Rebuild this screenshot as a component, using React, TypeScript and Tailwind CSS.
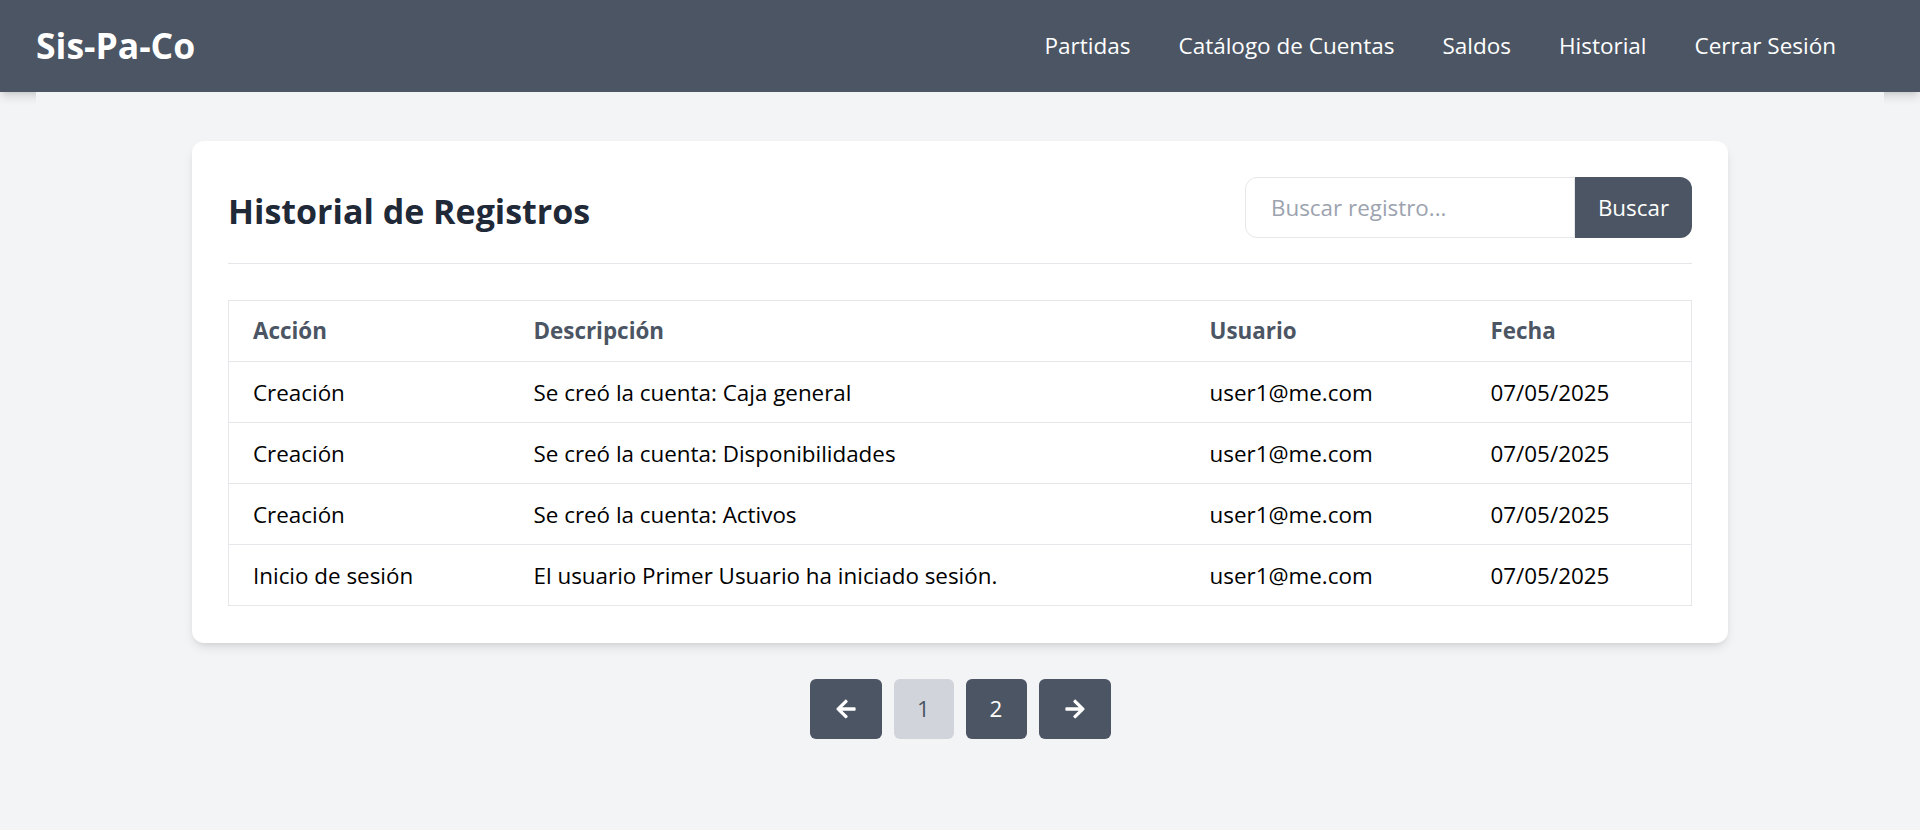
import { FaArrowLeft, FaArrowRight } from "react-icons/fa";

const rows = [
  { accion: "Creación", desc: "Se creó la cuenta: Caja general", user: "user1@me.com", fecha: "07/05/2025" },
  { accion: "Creación", desc: "Se creó la cuenta: Disponibilidades", user: "user1@me.com", fecha: "07/05/2025" },
  { accion: "Creación", desc: "Se creó la cuenta: Activos", user: "user1@me.com", fecha: "07/05/2025" },
  { accion: "Inicio de sesión", desc: "El usuario Primer Usuario ha iniciado sesión.", user: "user1@me.com", fecha: "07/05/2025" },
];

const navItems = ["Partidas", "Catálogo de Cuentas", "Saldos", "Historial", "Cerrar Sesión"];

export default function App() {
  return (
    <div className="min-h-screen bg-[#f3f4f6] font-['Open_Sans',sans-serif] text-[22.4px]">
      <header className="h-[92px] bg-[#4b5563] flex items-center justify-between pl-[36px] pr-[84px] shadow-[0_6px_9px_-1px_rgba(0,0,0,0.12),0_3px_6px_-3px_rgba(0,0,0,0.1)]">
        <div className="text-[35.5px] font-bold text-white leading-none">Sis-Pa-Co</div>
        <nav className="flex items-center gap-[48px] text-white text-[22.5px]">
          {navItems.map((n) => (
            <a key={n} className="leading-[34px] cursor-pointer">{n}</a>
          ))}
        </nav>
      </header>

      <main className="mx-[36px] bg-[#f3f4f6] pt-[49px] pb-[40px]">
        <div className="w-[1536px] mx-auto bg-white rounded-[12px] p-[36px] pb-[37px] shadow-[0_6px_12px_-2px_rgba(0,0,0,0.1),0_3px_6px_-3px_rgba(0,0,0,0.1)]">
          <div className="flex items-center justify-between pb-[25px] border-b border-[#e5e7eb]">
            <h1 className="text-[34px] font-bold text-[#1f2937] leading-[48px] pt-[6px]">Historial de Registros</h1>
            <div className="flex">
              <input
                type="text"
                placeholder="Buscar registro..."
                className="w-[330px] h-[61px] border border-[#e5e7eb] rounded-l-[12px] px-[25px] text-[22.4px] outline-none placeholder:text-[#9ca3af] font-['Open_Sans',sans-serif]"
              />
              <button className="w-[117px] h-[61px] bg-[#4b5563] text-white rounded-r-[12px] text-[22.4px]">Buscar</button>
            </div>
          </div>

          <table className="w-full mt-[36px] border border-[#e5e7eb] border-collapse">
            <colgroup>
              <col className="w-[281px]" />
              <col className="w-[676px]" />
              <col className="w-[281px]" />
              <col />
            </colgroup>
            <thead>
              <tr className="border-b border-[#e5e7eb]">
                <th className="h-[61px] px-[24px] text-left font-bold text-[#4b5563]">Acción</th>
                <th className="h-[61px] px-[24px] text-left font-bold text-[#4b5563]">Descripción</th>
                <th className="h-[61px] px-[24px] text-left font-bold text-[#4b5563]">Usuario</th>
                <th className="h-[61px] px-[24px] text-left font-bold text-[#4b5563]">Fecha</th>
              </tr>
            </thead>
            <tbody>
              {rows.map((r, i) => (
                <tr key={i} className="border-b border-[#e5e7eb]">
                  <td className="h-[61px] px-[24px] pt-[2px] text-black">{r.accion}</td>
                  <td className="h-[61px] px-[24px] pt-[2px] text-black">{r.desc}</td>
                  <td className="h-[61px] px-[24px] pt-[2px] text-black">{r.user}</td>
                  <td className="h-[61px] px-[24px] pt-[2px] text-black">{r.fecha}</td>
                </tr>
              ))}
            </tbody>
          </table>
        </div>

        <div className="flex justify-center gap-[12px] mt-[36px]">
          <button className="w-[72px] h-[60px] rounded-[6px] bg-[#4b5563] text-white flex items-center justify-center">
            <FaArrowLeft size={22} />
          </button>
          <button className="w-[60px] h-[60px] rounded-[6px] bg-[#d1d5db] text-[#4b5563] flex items-center justify-center">1</button>
          <button className="w-[61px] h-[60px] rounded-[6px] bg-[#4b5563] text-white flex items-center justify-center">2</button>
          <button className="w-[72px] h-[60px] rounded-[6px] bg-[#4b5563] text-white flex items-center justify-center">
            <FaArrowRight size={22} />
          </button>
        </div>
      </main>
    </div>
  );
}
